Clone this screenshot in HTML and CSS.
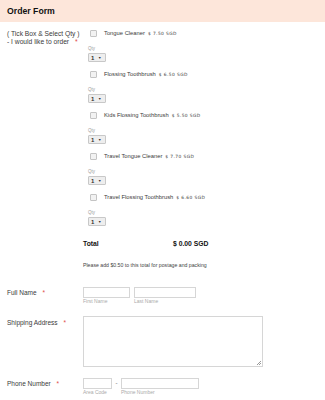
FILE: index.html
```html
<!DOCTYPE html>
<html lang="en">

<head>
    <meta charset="UTF-8">
    <meta name="viewport" content="width=device-width, initial-scale=1.0">
    <title>Order Form</title>
    <link rel="stylesheet" href="styles.css">
</head>

<body>
    <div class="header">Order Form</div>

    <div class="row order-row">
        <div class="label">( Tick Box &amp; Select Qty )<br>- I would like to order <span class="req">*</span></div>
        <div class="field">
            <ul class="products">
                <li class="product">
                    <div class="product-check"><span class="box"></span><span class="name">Tongue Cleaner</span><span class="price">$ 7.50 SGD</span></div>
                    <div class="qty-label">Qty</div>
                    <div class="qty-select">1 <span class="arrow">&#9660;</span></div>
                </li>
                <li class="product">
                    <div class="product-check"><span class="box"></span><span class="name">Flossing Toothbrush</span><span class="price">$ 6.50 SGD</span></div>
                    <div class="qty-label">Qty</div>
                    <div class="qty-select">1 <span class="arrow">&#9660;</span></div>
                </li>
                <li class="product">
                    <div class="product-check"><span class="box"></span><span class="name">Kids Flossing Toothbrush</span><span class="price">$ 5.50 SGD</span></div>
                    <div class="qty-label">Qty</div>
                    <div class="qty-select">1 <span class="arrow">&#9660;</span></div>
                </li>
                <li class="product">
                    <div class="product-check"><span class="box"></span><span class="name">Travel Tongue Cleaner</span><span class="price">$ 7.70 SGD</span></div>
                    <div class="qty-label">Qty</div>
                    <div class="qty-select">1 <span class="arrow">&#9660;</span></div>
                </li>
                <li class="product">
                    <div class="product-check"><span class="box"></span><span class="name">Travel Flossing Toothbrush</span><span class="price">$ 6.60 SGD</span></div>
                    <div class="qty-label">Qty</div>
                    <div class="qty-select">1 <span class="arrow">&#9660;</span></div>
                </li>
            </ul>
            <div class="total">
                <span class="total-label">Total</span>
                <span class="total-value">$ 0.00 SGD</span>
            </div>
            <p class="note">Please add $0.50 to this total for postage and packing</p>
        </div>
    </div>

    <div class="row name-row">
        <div class="label">Full Name <span class="req">*</span></div>
        <div class="field inputs">
            <div class="sub">
                <div class="input first"></div>
                <div class="sub-label">First Name</div>
            </div>
            <div class="sub">
                <div class="input last"></div>
                <div class="sub-label">Last Name</div>
            </div>
        </div>
    </div>

    <div class="row address-row">
        <div class="label">Shipping Address <span class="req">*</span></div>
        <div class="field">
            <div class="textarea"><span class="grip"></span></div>
        </div>
    </div>

    <div class="row phone-row">
        <div class="label">Phone Number <span class="req">*</span></div>
        <div class="field inputs">
            <div class="sub">
                <div class="input area"></div>
                <div class="sub-label">Area Code</div>
            </div>
            <span class="dash">-</span>
            <div class="sub">
                <div class="input phone"></div>
                <div class="sub-label">Phone Number</div>
            </div>
        </div>
    </div>
</body>

</html>
```

FILE: styles.css
```css
* {
    margin: 0;
    padding: 0;
    box-sizing: border-box;
}

ul {
    list-style: none;
}

body {
    width: 325px;
    font-family: "Liberation Sans", Arial, sans-serif;
    font-size: 6.5px;
    color: #3a3a3a;
    background-color: #fff;
}

.header {
    height: 22px;
    line-height: 22px;
    padding-left: 7px;
    font-size: 8.7px;
    font-weight: bold;
    color: #111;
    background-color: #fde6da;
}

.row {
    display: flex;
}

.label {
    width: 83px;
    padding-left: 7px;
    line-height: 8px;
    white-space: nowrap;
    flex-shrink: 0;
}

.req {
    color: #e04848;
    margin-left: 4px;
}

.field {
    flex: 1;
}

.order-row {
    margin-top: 4px;
}

.order-row .label {
    padding-top: 4px;
    font-size: 6.7px;
}

.product {
    height: 41px;
    margin-left: 5px;
}

.product-check {
    height: 14px;
    display: flex;
    align-items: center;
}

.box {
    width: 7px;
    height: 7px;
    margin-left: 2px;
    border: 1px solid #c4c4c4;
    border-radius: 1px;
    background-color: #f2f2f2;
}

.name {
    margin-left: 7px;
    font-size: 5.8px;
}

.price {
    margin-left: 3px;
    font-family: "DejaVu Sans", Verdana, sans-serif;
    font-size: 4.4px;
    letter-spacing: 0.4px;
}

.qty-label {
    margin-top: 6px;
    height: 6px;
    line-height: 6px;
    font-size: 4.5px;
    color: #999;
}

.qty-select {
    width: 18px;
    height: 9px;
    margin-top: 1px;
    padding-left: 2px;
    line-height: 8px;
    font-size: 6px;
    font-weight: bold;
    color: #333;
    border: 1px solid #c8c8c8;
    border-radius: 1px;
    background-color: #eee;
}

.arrow {
    font-size: 3.5px;
    margin-left: 2px;
    vertical-align: 1px;
}

.total {
    display: flex;
    margin-top: 8px;
    line-height: 10px;
    font-size: 6.8px;
    font-weight: bold;
    color: #111;
}

.total-label {
    width: 90px;
}

.note {
    margin-top: 13px;
    line-height: 7px;
    font-size: 5.2px;
    color: #444;
}

.name-row {
    margin-top: 18px;
}

.name-row .label,
.phone-row .label {
    padding-top: 2px;
}

.inputs {
    display: flex;
}

.input {
    height: 11px;
    border: 1px solid #d6d6d6;
    background-color: #fff;
}

.first {
    width: 47px;
    margin-right: 4px;
}

.last {
    width: 62px;
}

.area {
    width: 29px;
}

.phone {
    width: 78px;
}

.dash {
    width: 9px;
    text-align: center;
    line-height: 11px;
    font-size: 6px;
    color: #555;
}

.sub-label {
    margin-top: 1px;
    line-height: 5px;
    font-size: 5px;
    color: #aaa;
}

.address-row {
    margin-top: 12px;
}

.address-row .label {
    padding-top: 3px;
}

.textarea {
    position: relative;
    width: 180px;
    height: 51px;
    border: 1px solid #d6d6d6;
}

.grip {
    position: absolute;
    right: 1px;
    bottom: 1px;
    width: 4px;
    height: 4px;
    background: linear-gradient(135deg, transparent 45%, #999 45%, #999 55%, transparent 55%, transparent 70%, #999 70%, #999 80%, transparent 80%);
}

.phone-row {
    margin-top: 11px;
}
```
